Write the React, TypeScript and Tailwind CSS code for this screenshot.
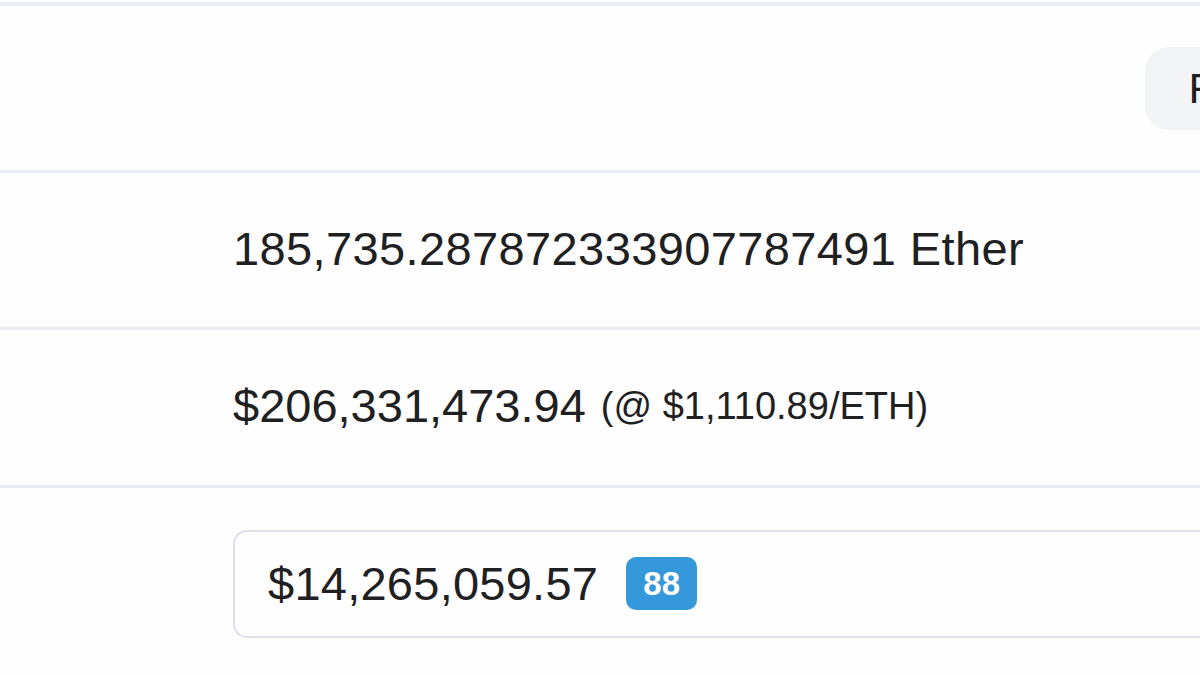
import React from "react";

export default function App() {
  const font = { fontFamily: '"Liberation Sans", Arial, Helvetica, sans-serif' };
  return (
    <div
      className="w-[1200px] h-[675px] overflow-hidden bg-[#fefefe] text-[#1e2022]"
      style={font}
    >
      <div className="mt-[2px] h-[4px] bg-[#eceef4]" />
      <div className="flex h-[164px] items-center justify-end">
        <div className="-mr-[124px] flex h-[83px] shrink-0 items-center rounded-[24px] bg-[#f2f3f5] pl-[43px] pr-[40px] text-[43px] leading-none text-[#1e2022]">
          Filter
        </div>
      </div>
      <div className="border-t-[3px] border-[#e9ebf2]">
        <div className="flex h-[154px] items-center pl-[233px] pb-[4px]">
          <span className="whitespace-nowrap text-[47px] leading-none tracking-[0.38px]">
            185,735.287872333907787491 Ether
          </span>
        </div>
      </div>
      <div className="border-t-[3px] border-[#e9ebf2]">
        <div className="flex h-[155px] items-center pl-[233px] pb-[4px]">
          <span className="whitespace-nowrap text-[47px] leading-none">
            $206,331,473.94
          </span>
          <span className="ml-[15px] whitespace-nowrap text-[38px] leading-none">
            (@ $1,110.89/ETH)
          </span>
        </div>
      </div>
      <div className="border-t-[3px] border-[#e9ebf2] pl-[233px] pt-[42px]">
        <div className="flex h-[108px] w-[1100px] items-center rounded-[14px] border-2 border-[#dfe2ea] pl-[33px] pb-[2px]">
          <span className="whitespace-nowrap text-[47px] leading-none tracking-[0.25px]">
            $14,265,059.57
          </span>
          <span className="ml-[28px] flex h-[53px] w-[71px] items-center justify-center rounded-[10px] bg-[#3498db] text-[33px] font-semibold leading-none text-white">
            88
          </span>
        </div>
      </div>
    </div>
  );
}
